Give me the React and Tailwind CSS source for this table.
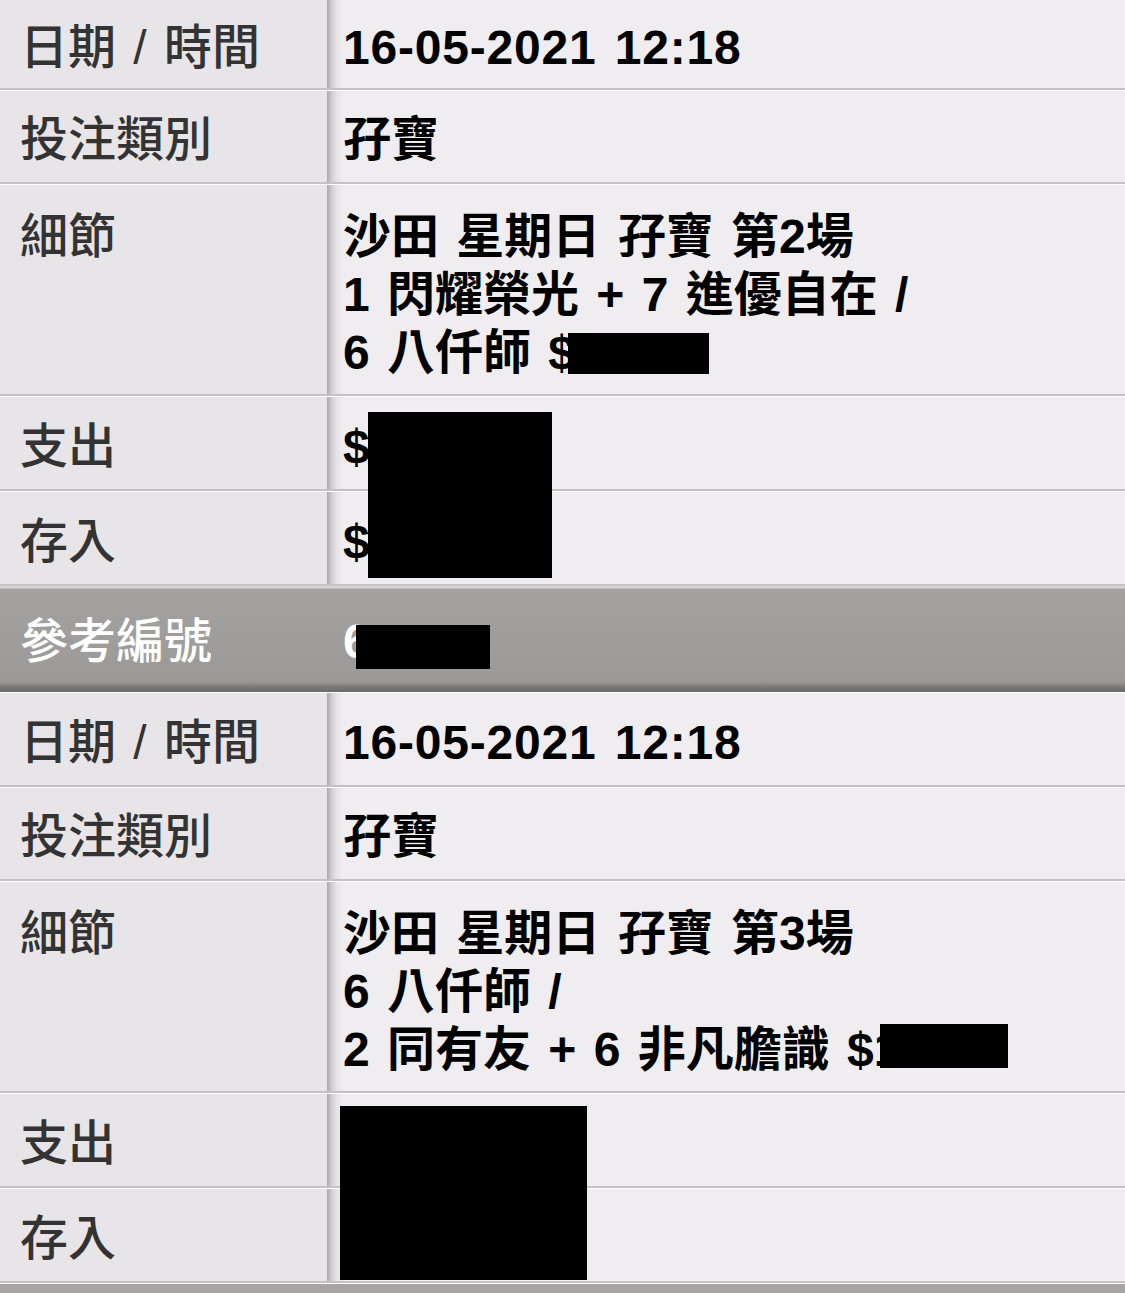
import React from "react";

const FONT = { fontFamily: '"Liberation Sans", "Noto Sans CJK TC", sans-serif' };

const GROUPS = [
  {
    date: "16-05-2021 12:18",
    type: "孖寶",
    detail: ["沙田 星期日 孖寶 第2場", "1 閃耀榮光 + 7 進優自在 /", "6 八仟師 $"],
    out: "$",
    inn: "$",
  },
  {
    date: "16-05-2021 12:18",
    type: "孖寶",
    detail: ["沙田 星期日 孖寶 第3場", "6 八仟師 /", "2 同有友 + 6 非凡膽識 $1"],
    out: "",
    inn: "",
  },
];

// black redaction boxes laid over the screenshot text
const REDACT = [
  "left-[568px] top-[333px] w-[141px] h-[41px]",
  "left-[368px] top-[412px] w-[184px] h-[166px]",
  "left-[356px] top-[625px] w-[134px] h-[44px]",
  "left-[880px] top-[1024px] w-[128px] h-[44px]",
  "left-[340px] top-[1106px] w-[247px] h-[174px]",
];

function Row({ label, children, h, top = true, multi = false }) {
  const align = multi ? "items-start pt-[23px]" : "items-center pt-[7px]";
  return (
    <div className={`flex ${h} border-b-2 border-[#c3c1c3] ${top ? "border-t border-t-white" : ""}`}>
      <div
        className={`w-[327px] shrink-0 bg-[#e7e5e7] pl-[20px] text-[48px] font-medium text-[#333] [word-spacing:4px] flex ${align}`}
      >
        <span className="leading-[58px]">{label}</span>
      </div>
      <div
        className={`flex-1 bg-[linear-gradient(to_right,#a9a7a9,#d2d0d2_5px,#e6e4e6_10px,#efedef_17px)] pl-[16px] text-[48px] font-bold text-black [word-spacing:4px] flex ${align}`}
      >
        {children}
      </div>
    </div>
  );
}

export default function App() {
  return (
    <div className="relative w-[1125px] h-[1293px] overflow-hidden bg-[#efedef]" style={FONT}>
      {GROUPS.map((g, i) => (
        <div key={i}>
          {i > 0 && (
            <div className="flex h-[106px] items-center pt-[6px] text-white text-[48px] bg-[linear-gradient(to_bottom,#d6d6d6_0px,#d6d6d6_2px,#a3a2a1_3px,#9b9a99_90%,#7c7b7b_95%,#6a6a6a_100%)]">
              <span className="w-[327px] shrink-0 pl-[20px] font-medium leading-[58px]">參考編號</span>
              <span className="pl-[16px] font-bold leading-[58px]">6</span>
            </div>
          )}
          <Row label="日期 / 時間" h={i === 0 ? "h-[90px]" : "h-[95px]"} top={i > 0}>
            <span className="leading-[58px] tracking-[0.8px]">{g.date}</span>
          </Row>
          <Row label="投注類別" h="h-[94px]">
            <span className="leading-[58px]">{g.type}</span>
          </Row>
          <Row label="細節" h="h-[212px]" multi>
            <div className="leading-[58px] whitespace-pre">
              {g.detail.map((l) => (
                <div key={l}>{l}</div>
              ))}
            </div>
          </Row>
          <Row label="支出" h="h-[95px]">
            <span className="leading-[58px]">{g.out}</span>
          </Row>
          <Row label="存入" h="h-[95px]">
            <span className="leading-[58px]">{g.inn}</span>
          </Row>
        </div>
      ))}
      <div className="h-[12px] border-t border-white bg-[#a6a5a4]" />
      {REDACT.map((c) => (
        <div key={c} className={`absolute bg-black ${c}`} />
      ))}
    </div>
  );
}
